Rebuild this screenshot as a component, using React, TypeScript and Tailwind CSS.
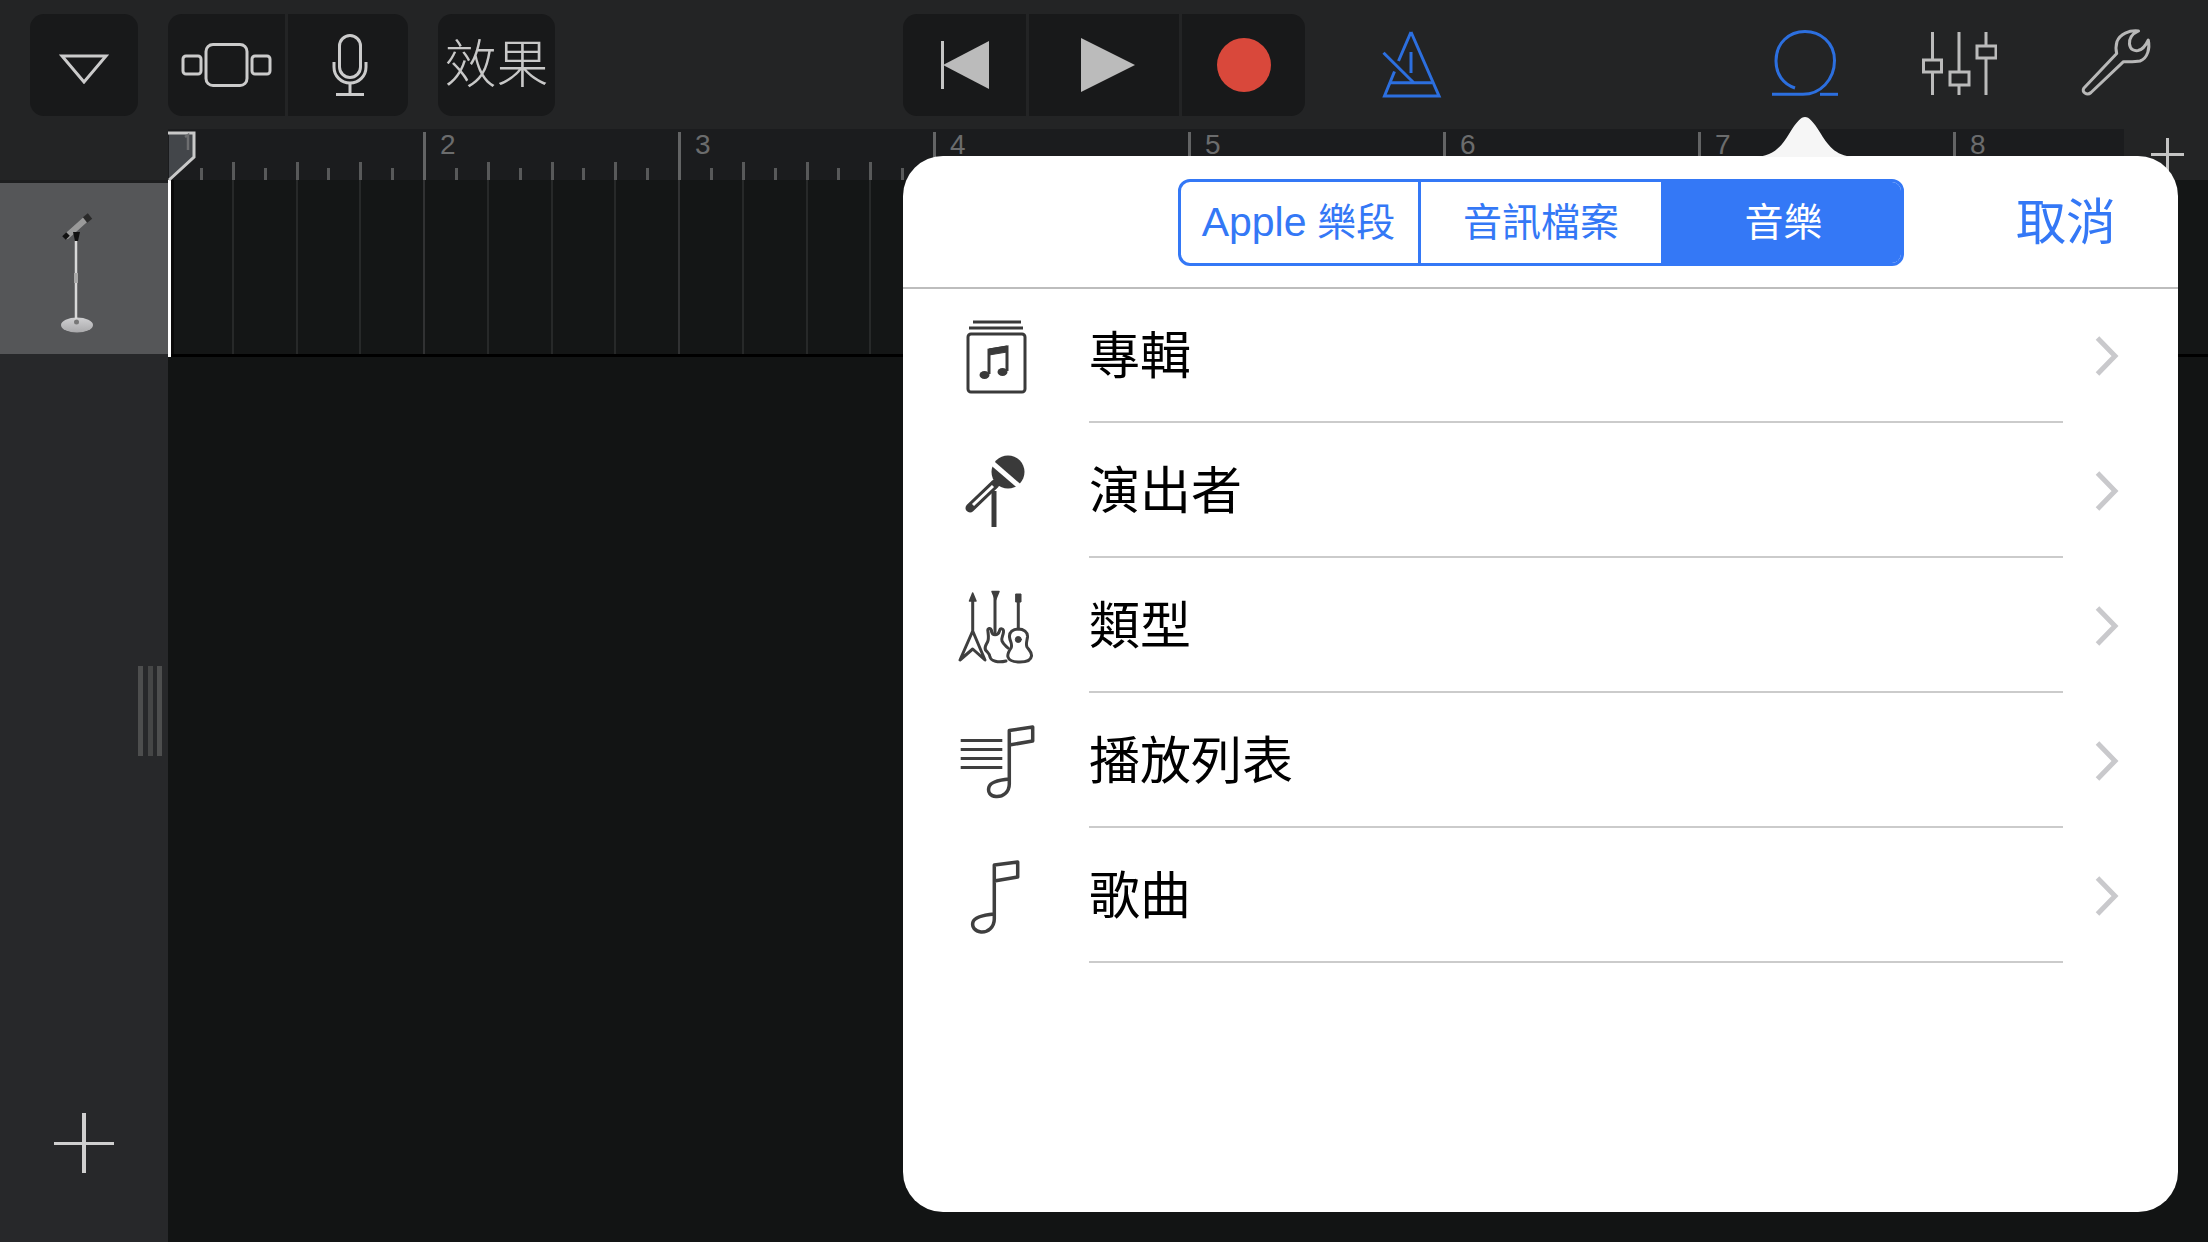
const BARS = [1, 2, 3, 4, 5, 6, 7, 8]
const EIGHTHS = [0, 1, 2, 3, 4, 5, 6, 7]
const BEATS = [0, 1, 2, 3]

const AlbumIcon = () => (
  <svg width="100" height="100" viewBox="0 0 100 100" fill="none" stroke="#3a3a3a">
    <path d="M35 16H83M31 22H85" strokeWidth="3" />
    <rect x="30" y="28" width="57" height="58" rx="3" strokeWidth="3" />
    <path d="M51 68V44L69 41V65" strokeWidth="3" />
    <path d="M51 43L69 40V46L51 49Z" fill="#3a3a3a" strokeWidth="1" />
    <ellipse cx="46.5" cy="69" rx="5" ry="4" fill="#3a3a3a" stroke="none" />
    <ellipse cx="64.5" cy="66" rx="5" ry="4" fill="#3a3a3a" stroke="none" />
  </svg>
)

const MicIcon = () => (
  <svg width="100" height="100" viewBox="0 0 100 100" fill="none">
    <path d="M56 50V86" stroke="#3a3a3a" strokeWidth="5" />
    <path d="M57 43L32 67" stroke="#3a3a3a" strokeWidth="9" strokeLinecap="round" />
    <path d="M55 45L35 64" stroke="#fff" strokeWidth="3" />
    <circle cx="70" cy="31" r="16.5" fill="#3a3a3a" />
    <path d="M53 21L82 46" stroke="#fff" strokeWidth="5" />
  </svg>
)

const GuitarsIcon = () => (
  <svg width="100" height="100" viewBox="0 0 100 100" fill="none" stroke="#3f3f3f" strokeWidth="3" strokeLinejoin="round" strokeLinecap="round">
    <path d="M34.7 24V55L22 84L34.7 73L47 84L34.7 55" />
    <path d="M34.7 17L31.500 25H38Z" fill="#3f3f3f" strokeWidth="1.5" />
    <path d="M57 20V58" />
    <path d="M54 15.500H61L57.500 24Z" fill="#3f3f3f" strokeWidth="1.5" />
    <path d="M53.500 55C53 51 49 52 50 56C50.500 60 51 63 49.500 66C48 69 46 71 47.500 74C50 77 52 78 52 81C53 85 60 87 68 85" />
    <path d="M53.500 55C54 60 60 60 61.500 55C62 52 66 52 65.500 56C65 60 63 62 64 65C65 68 68 70 70 72" />
    <path d="M80.300 20V53" />
    <path d="M78 18H83V26H78Z" fill="#3f3f3f" strokeWidth="1" />
    <path d="M80.300 53C75 53 71 56 71.500 61C72 66 75 68 73 72C71 75 69 78 70 81C71 85 76 86 82 86C88 86 93 84 93.500 80C94 76 91 74 89 71C87.500 68 89 65 89.500 61C90 56 85.500 53 80.300 53Z" />
    <circle cx="80.300" cy="63.500" r="3" fill="#3f3f3f" strokeWidth="1" />
  </svg>
)

const PlaylistIcon = () => (
  <svg width="100" height="100" viewBox="0 0 100 100" fill="none" stroke="#3f3f3f">
    <path d="M22.7 29.5H64.3M22.7 38.5H64.3M22.7 47.5H64.3M22.7 56.5H64.3" strokeWidth="3" />
    <path d="M71.3 34V19.5L94.7 16V30L71.3 34V73C71.3 81 65 86 58 85.500C52 85 49.500 81 51 76C52.500 71 60 69 71.300 68" strokeWidth="3.500" strokeLinejoin="round" />
  </svg>
)

const SongIcon = () => (
  <svg width="100" height="100" viewBox="0 0 100 100" fill="none" stroke="#3f3f3f">
    <path d="M56.300 35V19L79.700 16V31L56.300 35V73C56.300 81 50 86.500 43 86C37 85.500 33.500 81 35 76C36.500 71 45 69 56.300 68" strokeWidth="3.500" strokeLinejoin="round" />
  </svg>
)

const ROWS = [
  { label: '專輯', icon: <AlbumIcon /> },
  { label: '演出者', icon: <MicIcon /> },
  { label: '類型', icon: <GuitarsIcon /> },
  { label: '播放列表', icon: <PlaylistIcon /> },
  { label: '歌曲', icon: <SongIcon /> },
]

const Chevron = () => (
  <svg width="25" height="44" viewBox="0 0 25 44" fill="none" className="ml-[31px] shrink-0">
    <path d="M3.500 4L21 22L3.500 40" stroke="#c9c9cc" strokeWidth="5" />
  </svg>
)

const MicStand = () => (
  <svg width="60" height="130" viewBox="0 0 60 130" fill="none">
    <defs>
      <linearGradient id="base" x1="0" y1="0" x2="0" y2="1">
        <stop offset="0" stopColor="#cfcfd1" />
        <stop offset="1" stopColor="#a9a9ab" />
      </linearGradient>
    </defs>
    <ellipse cx="32" cy="120" rx="16" ry="7.500" fill="url(#base)" />
    <path d="M31 36V117" stroke="#d8d8d8" strokeWidth="2.500" />
    <path d="M31 68V78" stroke="#a8a8a8" strokeWidth="4" />
    <circle cx="31.500" cy="117" r="2.500" fill="#777" />
    <path d="M22 31L41 14" stroke="#9a9a9a" strokeWidth="6" strokeLinecap="round" />
    <path d="M40 15L45 11" stroke="#2a2a2a" strokeWidth="7" />
    <path d="M19 33L23 29" stroke="#111" strokeWidth="5" />
    <path d="M28 27L35 27L33 36H30Z" fill="#111" />
  </svg>
)

export default function App() {
  return (
    <div className="relative w-[2208px] h-[1242px] overflow-hidden flex flex-col bg-[#121414] font-['Liberation_Sans','Noto_Sans_CJK_TC',sans-serif]">
      {/* toolbar */}
      <div className="h-[129px] shrink-0 bg-[#232425] flex pt-[14px] pl-[30px]">
        <div className="w-[108px] h-[102px] rounded-[14px] bg-[#18191a] flex items-center justify-center pt-[8px]">
          <svg width="50" height="30" viewBox="0 0 50 30" fill="none">
            <path d="M3 2H47L25 28Z" stroke="#cbcbcb" strokeWidth="3" />
          </svg>
        </div>
        <div className="ml-[30px] w-[240px] h-[102px] rounded-[14px] bg-[#18191a] flex overflow-hidden">
          <div className="w-[117px] flex items-center justify-center">
            <svg width="92" height="44" viewBox="0 0 92 44" fill="none" stroke="#cbcbcb" strokeWidth="3">
              <rect x="2" y="13" width="18" height="18" rx="3" />
              <rect x="25" y="1.500" width="41" height="41" rx="7" />
              <rect x="71" y="13" width="18" height="18" rx="3" />
            </svg>
          </div>
          <div className="w-[3px] bg-[#232425]" />
          <div className="flex-1 flex items-center justify-center pl-[3px]">
            <svg width="36" height="62" viewBox="0 0 36 62" fill="none" stroke="#cbcbcb" strokeWidth="3">
              <rect x="7.500" y="1.500" width="21" height="42" rx="10.500" />
              <path d="M2 28V33C2 42 9 49 18 49C27 49 34 42 34 33V28" />
              <path d="M18 49V60M4 60.500H32" />
            </svg>
          </div>
        </div>
        <div className="ml-[30px] w-[117px] h-[102px] rounded-[14px] bg-[#18191a] flex items-center justify-center text-[52px] font-light leading-none text-[#c8c8c8] whitespace-nowrap">
          效果
        </div>
        <div className="ml-[348px] w-[402px] h-[102px] rounded-[14px] bg-[#18191a] flex overflow-hidden">
          <div className="w-[123px] flex items-center pl-[38px]">
            <svg width="50" height="48" viewBox="0 0 50 48" fill="none">
              <rect x="0" y="0" width="3" height="48" fill="#c4c4c4" />
              <path d="M2 24L48 0V48Z" fill="#bbbbbb" />
            </svg>
          </div>
          <div className="w-[3px] bg-[#232425]" />
          <div className="w-[150px] flex items-center pl-[52px]">
            <svg width="54" height="54" viewBox="0 0 54 54">
              <path d="M0 0L54 27L0 54Z" fill="#bbbbbb" />
            </svg>
          </div>
          <div className="w-[3px] bg-[#232425]" />
          <div className="flex-1 flex items-center pl-[35px]">
            <div className="w-[54px] h-[54px] rounded-full bg-[#d9483b]" />
          </div>
        </div>
        <svg width="60" height="68" viewBox="0 0 60 68" fill="none" stroke="#2c6fdf" strokeWidth="3" className="ml-[77px] mt-[16px] shrink-0">
          <path d="M29 2L16.500 31M12.500 41.500L2.500 66H57L29 2" />
          <path d="M7.500 52.700H50" />
          <path d="M1.500 22.700L31.500 52.500" />
          <path d="M29 22V43" />
        </svg>
        <svg width="70" height="68" viewBox="0 0 70 68" fill="none" stroke="#2c6fdf" strokeWidth="3" className="ml-[328px] mt-[14px] shrink-0">
          <path d="M2 66.300H33C50 66.300 64.500 52 64.500 32.500C64.500 14 50 3.500 35 3.500C19 3.500 6 15 6 33C6 46 13 56 25 60" />
          <path d="M50 66.300H68" />
        </svg>
        <svg width="76" height="65" viewBox="0 0 76 65" fill="none" stroke="#bbbbbb" strokeWidth="3" className="ml-[81px] mt-[18px] shrink-0">
          <path d="M11.500 0V28M11.500 41V63M38 0V40M38 53V63M65 0V13M65 26V63" />
          <rect x="2.500" y="28" width="18" height="12" />
          <rect x="29" y="40" width="19" height="13" />
          <rect x="56" y="14" width="19" height="12" />
        </svg>
        <svg width="72" height="72" viewBox="0 0 72 72" fill="none" stroke="#b8b8b8" strokeWidth="3" strokeLinejoin="round" className="ml-[83px] mt-[14px] shrink-0">
          <path d="M4 60L36.700 25.500C35.500 21 36 17 37 13.500C40 6 49 2 58.500 3C52 6 49 11 49.500 16C50 22 55 23 58 22.500C63 21.500 66 17 68.300 12C70 20 68 30 60 33C55 34 49 33.700 43.500 33.700L11 64.500C7 68 1 64 4 60Z" />
        </svg>
      </div>

      {/* ruler */}
      <div className="h-[51px] shrink-0 flex bg-[#232425]">
        <div className="w-[168px] shrink-0 relative z-10">
          <svg width="28" height="50" viewBox="0 0 28 50" className="absolute left-[168px] top-[2px]">
            <path d="M0 2H26V26L1 49V2Z" fill="#43464a" />
            <path d="M0 2H26V26L1 49" fill="none" stroke="#c9c9c9" strokeWidth="3" />
            <path d="M17 6L20 4V19" fill="none" stroke="#6d6e70" strokeWidth="2.500" />
          </svg>
        </div>
        <div className="w-[1956px] shrink-0 flex overflow-hidden bg-[#1b1c1e]">
          {BARS.map((bar) => (
            <div key={bar} className="relative w-[255px] h-full shrink-0 flex items-end">
              {bar > 1 && (
                <span className="absolute left-[17px] top-[1px] text-[28px] leading-[30px] text-[#6b6c6d]">{bar}</span>
              )}
              {EIGHTHS.map((e) => (
                <div key={e} className="w-[31.875px] h-full shrink-0 flex items-end">
                  <div
                    className={
                      e === 0
                        ? bar === 1
                          ? 'w-[3px] h-[0px]'
                          : 'w-[3px] h-[48px] bg-[#636465]'
                        : e % 2 === 0
                          ? 'w-[3px] h-[18px] bg-[#58595a]'
                          : 'w-[3px] h-[12px] bg-[#58595a]'
                    }
                  />
                </div>
              ))}
            </div>
          ))}
        </div>
        <div className="flex-1 relative">
          <div className="absolute left-[27px] top-[24px] w-[33px] h-[3px] bg-[#c4c4c4]" />
          <div className="absolute left-[42px] top-[9px] w-[3px] h-[34px] bg-[#c4c4c4]" />
        </div>
      </div>

      {/* track row */}
      <div className="h-[177px] shrink-0 flex">
        <div className="w-[168px] shrink-0 flex flex-col bg-[#27282a]">
          <div className="h-[3px] bg-[#1d1e1f]" />
          <div className="h-[171px] bg-[#555658] pt-[22px] pl-[45px]">
            <MicStand />
          </div>
        </div>
        <div className="relative flex-1 flex flex-col bg-[#141616] overflow-hidden">
          <div className="absolute left-0 top-0 w-[3px] h-[177px] bg-white" />
          <div className="absolute left-[3px] top-0 w-[3px] h-[174px] bg-[#0a0a0a]" />
          <div className="h-[174px] flex">
            {BARS.map((bar) => (
              <div key={bar} className="w-[255px] h-full shrink-0 flex">
                {BEATS.map((b) => (
                  <div key={b} className="w-[63.75px] h-full shrink-0">
                    <div className={b === 0 ? 'w-[2px] h-full bg-[#313233]' : 'w-[2px] h-full bg-[#272929]'} />
                  </div>
                ))}
              </div>
            ))}
          </div>
          <div className="h-[3px] bg-black" />
        </div>
      </div>

      {/* lower area */}
      <div className="flex-1 flex">
        <div className="w-[168px] shrink-0 bg-[#27282a] flex flex-col items-end">
          <div className="mt-[309px] mr-[6px] flex gap-[4.500px]">
            <div className="w-[5px] h-[90px] bg-[#4d4e4e]" />
            <div className="w-[5px] h-[90px] bg-[#454646]" />
            <div className="w-[5px] h-[90px] bg-[#4d4e4e]" />
          </div>
          <div className="self-start ml-[54px] mt-[357px] relative w-[60px] h-[60px] flex items-center justify-center">
            <div className="w-[60px] h-[3px] bg-[#cfcfcf]" />
            <div className="absolute left-[28px] top-0 w-[4px] h-[60px] bg-[#cfcfcf]" />
          </div>
        </div>
        <div className="flex-1 bg-[#121414]" />
      </div>

      {/* popover */}
      <div className="absolute left-[903px] top-[156px] w-[1275px] h-[1056px] rounded-[40px] bg-white">
        <svg width="104" height="40" viewBox="0 0 104 40" className="absolute left-[850px] top-[-39px]">
          <path d="M0 40C20 40 28 30 36 17C44 4 48 0 52 0C56 0 60 4 68 17C76 30 84 40 104 40Z" fill="#f6f6f6" />
        </svg>
        <div className="h-[133px] -mb-px border-b-2 border-[#bdbdbd] flex pt-[23px] pl-[275px]">
          <div className="w-[726px] h-[87px] rounded-[12px] border-[3px] border-[#3478f6] flex overflow-hidden text-[39px] leading-none text-[#3478f6]">
            <div className="w-[237px] flex items-center justify-center whitespace-nowrap pr-[2px]">
              <span className="text-[41px]">Apple</span>&nbsp;樂段
            </div>
            <div className="w-[3px] bg-[#3478f6]" />
            <div className="w-[240px] flex items-center justify-center whitespace-nowrap">音訊檔案</div>
            <div className="flex-1 bg-[#3478f6] text-white flex items-center justify-center whitespace-nowrap pl-[5px]">音樂</div>
          </div>
          <div className="ml-[112px] h-[87px] flex items-center text-[50px] leading-none text-[#3478f6] whitespace-nowrap">取消</div>
        </div>
        {ROWS.map((row) => (
          <div key={row.label} className="h-[135px] flex items-center pl-[35px]">
            <div className="w-[100px] shrink-0">{row.icon}</div>
            <div className="ml-[51px] w-[974px] h-full shrink-0 border-b-2 border-[#cbcbcb] flex items-center pt-[3px] text-[51px] leading-none text-black whitespace-nowrap">
              {row.label}
            </div>
            <Chevron />
          </div>
        ))}
      </div>
    </div>
  )
}
